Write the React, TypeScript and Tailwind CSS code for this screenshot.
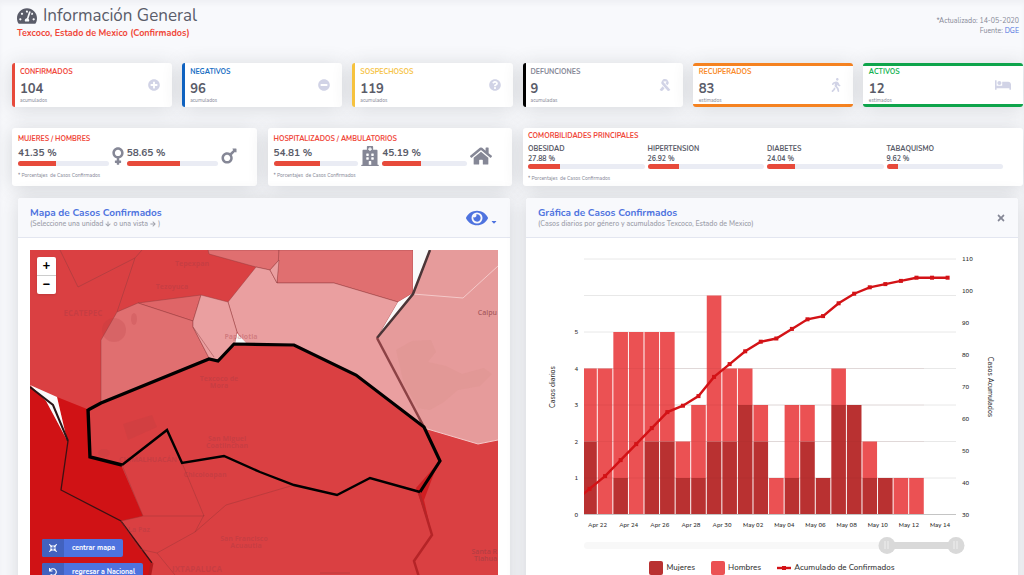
import React, { Fragment, useState } from 'react';
import * as Slider from '@radix-ui/react-slider';
import type { IconType } from 'react-icons';
import {
  FaArrowDown,
  FaArrowRight,
  FaBed,
  FaCaretDown,
  FaCompressArrowsAlt,
  FaEye,
  FaHome,
  FaHospital,
  FaMars,
  FaMinusCircle,
  FaPlusCircle,
  FaQuestionCircle,
  FaRibbon,
  FaTachometerAlt,
  FaTimes,
  FaUndo,
  FaVenus,
  FaWalking,
} from 'react-icons/fa';

type Stat = {
  label: string;
  value: number;
  note: string;
  border: string;
  color: string;
  icon: IconType;
  iconSize: string;
};

const stats: Stat[] = [
  { label: 'CONFIRMADOS', value: 104, note: 'acumulados', border: 'border-l-3 border-[#e74a3b]', color: 'text-[#f0483a]', icon: FaPlusCircle, iconSize: 'size-3' },
  { label: 'NEGATIVOS', value: 96, note: 'acumulados', border: 'border-l-3 border-[#0f62c0]', color: 'text-[#1a6fc4]', icon: FaMinusCircle, iconSize: 'size-3' },
  { label: 'SOSPECHOSOS', value: 119, note: 'acumulados', border: 'border-l-3 border-[#f6c23e]', color: 'text-[#f6c44a]', icon: FaQuestionCircle, iconSize: 'size-3' },
  { label: 'DEFUNCIONES', value: 9, note: 'acumuladas', border: 'border-l-3 border-black', color: 'text-[#858796]', icon: FaRibbon, iconSize: 'size-3' },
  { label: 'RECUPERADOS', value: 83, note: 'estimados', border: 'border-y-3 border-[#f58220]', color: 'text-[#f98a28]', icon: FaWalking, iconSize: 'h-3.5 w-2.5' },
  { label: 'ACTIVOS', value: 12, note: 'estimados', border: 'border-y-3 border-[#0ea44b]', color: 'text-[#16b455]', icon: FaBed, iconSize: 'size-4' },
];

const comorbidities = [
  { name: 'OBESIDAD', pct: 27.88 },
  { name: 'HIPERTENSION', pct: 26.92 },
  { name: 'DIABETES', pct: 24.04 },
  { name: 'TABAQUISMO', pct: 9.62 },
];

// [total, mujeres, acumulado]
const days: [number, number, number][] = [
  [4, 2, 38], [4, 0, 42], [5, 1, 47], [5, 0, 52], [5, 2, 57], [5, 2, 62],
  [2, 1, 64], [3, 1, 67], [6, 2, 73], [4, 2, 77], [4, 3, 81], [3, 2, 84],
  [1, 0, 85], [3, 1, 88], [3, 2, 91], [1, 1, 92], [4, 3, 96], [3, 3, 99],
  [2, 1, 101], [1, 1, 102], [1, 0, 103], [1, 0, 104], [0, 0, 104], [0, 0, 104],
];

const dateLabels = ['Apr 22', 'Apr 24', 'Apr 26', 'Apr 28', 'Apr 30', 'May 02', 'May 04', 'May 06', 'May 08', 'May 10', 'May 12', 'May 14'];

const cardShadow = 'shadow-[0_2px_20px_rgba(58,59,69,0.18)]';

function StatCard({ stat }: { stat: Stat }) {
  const Icon = stat.icon;
  const sideBorder = stat.border.includes('border-l');
  return (
    <div className={`flex h-11 items-center justify-between rounded-[3px] bg-white pr-3 ${sideBorder ? 'pl-[5px]' : 'pl-1.5'} ${stat.border} ${cardShadow}`}>
      <div className="min-w-0">
        <h2 className={`text-[7px] leading-[10px] font-bold ${stat.color}`}>{stat.label}</h2>
        <p className="mt-1 text-[13px] leading-[17px] font-bold text-[#5a5c69]">{stat.value}</p>
        <p className="text-[5px] leading-[5px] text-[#858796]">{stat.note}</p>
      </div>
      <Icon className={`${stat.iconSize} text-[#d1d3e6]`} />
    </div>
  );
}

function Progress({ value, label }: { value: number; label: string }) {
  return (
    <div
      role="progressbar"
      aria-label={label}
      aria-valuenow={value}
      aria-valuemin={0}
      aria-valuemax={100}
      className="h-[5px] w-full overflow-hidden rounded-[3px] bg-[#eaecf4]"
    >
      <div className="h-full bg-[#e74a3b]" style={{ width: `${value}%` }} />
    </div>
  );
}

type SplitProps = {
  title: string;
  items: { label: string; pct: string; icon: IconType; iconClass: string }[];
};

function SplitCard({ title, items }: SplitProps) {
  return (
    <section className={`rounded-[3px] bg-white pt-1.5 pr-5 pl-1.5 ${cardShadow}`}>
      <h2 className="text-[7px] leading-[10px] font-bold text-[#f0483a]">{title}</h2>
      <div className="mt-0.5 flex h-5 items-center gap-[3px]">
        {items.map(({ label, pct, icon: Icon, iconClass }) => (
          <Fragment key={label}>
            <div className="flex-1">
              <p className="text-[10px] leading-[15px] font-bold text-[#5a5c69]">{pct} %</p>
              <Progress value={Number(pct)} label={label} />
            </div>
            <Icon className={`shrink-0 text-[#858796] ${iconClass}`} />
          </Fragment>
        ))}
      </div>
      <p className="mt-1.5 text-[5px] leading-[7px] text-[#858796]">* Porcentajes &nbsp;de Casos Confirmados</p>
    </section>
  );
}

function CasesMap() {
  return (
    <svg viewBox="30 250 468 345" className="block w-full" role="img" aria-label="Mapa de Casos Confirmados">
      <rect x="30" y="250" width="468" height="345" fill="#da4042" />
      <g stroke="#8f3b3d" strokeOpacity=".45" strokeWidth="1">
        <path d="M208 250L209 254L256 267L270 270L279 260V250Z" fill="#e06f70" />
        <path d="M279 250H413V293L398 302L334 283H277Z" fill="#e06f70" />
        <path d="M256 267L270 270L277 283H334L398 302L377 338L424 428L356 375L294 345H246L237 332L228 302Z" fill="#ea9fa0" />
        <path d="M270 270L279 260L277 283Z" fill="#ea9fa0" />
        <path d="M138 303L201 295L193 321Z" fill="#df6567" />
        <path d="M101 403V340L117 312L138 303L193 321V327L209 358Z" fill="#e06f70" />
        <path d="M201 295L228 302L237 332L235 344L218 360L209 358L193 327V321Z" fill="#ea9fa0" />
        <path d="M193 327L214 357" fill="none" />
        <path d="M60 250L78 287L135 258L142 250M135 258L117 312" fill="none" />
      </g>
      <path d="M430 250H498V440L478 444L424 428L377 338L413 293Z" fill="#e69b9b" />
      <path d="M396 350L412 341L431 340L436 352L428 362L446 366L462 374L484 368L492 374L480 386L458 390L444 402L430 410L418 408L404 384Z" fill="#d98f88" fillOpacity=".25" />
      <path d="M413 250H430L413 293ZM413 293L398 302L377 338ZM237 333L247 344H235Z" fill="#fafafa" />
      <path d="M413 294L463 298L498 266M424 428L478 444L498 440" fill="none" stroke="#f4c9c9" strokeWidth="1" />
      <path d="M430 250L413 294L377 338" fill="none" stroke="#4c3537" strokeWidth="2.5" />
      <path d="M377 338L424 427" fill="none" stroke="#8c4245" strokeWidth="2.5" />

      <path d="M30 387L45 398L67 441L57 397L87 409L90 457L121 465L143 516L121 521L152 563L146 595H30Z" fill="#d01215" />
      <path d="M30 385L57 397L67 440L46 401Z" fill="#fafafa" />
      <path d="M30 387L53 405L68 441" fill="none" stroke="#2a1416" strokeWidth="2" />
      <path d="M68 441L61 490L121 521L152 563" fill="none" stroke="#3c1113" strokeWidth="1.3" />
      <path d="M152 563L146 595" fill="none" stroke="#b31c1f" strokeWidth="3" />
      <g fill="none" stroke="#9c3537" strokeOpacity=".45" strokeWidth="1">
        <path d="M122 465L143 516L121 521M143 516H204L182 463" />
        <path d="M204 515L195 532L157 553L175 575L184 595M195 532L226 505L294 485" />
        <path d="M121 521L139 549L157 553M320 573H350" />
      </g>
      <path d="M438 463L416 488L432 535L424 500Z" fill="#d01e21" />
      <path d="M419 492L432 535L414 561L423 590" fill="none" stroke="#b52427" strokeWidth="2.5" />
      <g fill="#b43a40" fillOpacity=".2">
        <circle cx="114" cy="330" r="12" />
        <ellipse cx="134" cy="319" rx="3" ry="6" />
        <path d="M123 424L152 415L157 427L128 440Z" />
        <ellipse cx="104" cy="453" rx="6" ry="4" />
      </g>
      <g className="font-['Open_Sans',sans-serif]" fontSize="7" fontWeight="700" fill="#a33a42" fillOpacity=".35" textAnchor="middle">
        <text x="83" y="316" fontSize="8">ECATEPEC</text>
        <text x="192" y="266">Tepexpan</text>
        <text x="172" y="289">Tezoyuca</text>
        <text x="241" y="339">Papalotla</text>
        <text x="219" y="381">Texcoco de</text>
        <text x="219" y="388">Mora</text>
        <text x="227" y="441">San Miguel</text>
        <text x="227" y="448">Coatlinchan</text>
        <text x="148" y="462">CHIMALHUACÁN</text>
        <text x="205" y="477">Chicoloapan</text>
        <text x="244" y="541">San Francisco</text>
        <text x="246" y="548">Acuautla</text>
        <text x="197" y="572" fontSize="8">IXTAPALUCA</text>
        <text x="139" y="532">La Paz</text>
      </g>
      <g className="font-['Open_Sans',sans-serif]" fontSize="7" fontWeight="600" fill="#8c3c42" fillOpacity=".7" textAnchor="end">
        <text x="497" y="315">Calpu</text>
        <text x="497" y="554" fillOpacity=".5">Santa R</text>
        <text x="497" y="561" fillOpacity=".5">Tlahua</text>
      </g>
      <path d="M88 410L101 403L209 359L218 361L234 344L294 345L356 375L424 427L440 461L420 492" fill="none" stroke="#000" strokeWidth="3.2" />
      <path d="M88 409L90 457L122 465" fill="none" stroke="#000" strokeWidth="3.4" />
      <path d="M122 465L167 430L182 463L224 456L260 472L294 485L337 495L370 478L420 492" fill="none" stroke="#000" strokeWidth="2.4" />
    </svg>
  );
}

const PITCH = 15.57;
const yLeft = (n: number) => 276.5 - n * 36.5;
const yRight = (n: number) => 276.5 - (n - 30) * 3.2;
const xDay = (i: number) => 63.5 + i * PITCH;

function CasesChart() {
  const points = days.map((d, i) => `${xDay(i)},${yRight(d[2])}`).join(' ');
  return (
    <svg viewBox="0 0 492 298" className="block w-full" role="img" aria-label="Gráfica de Casos Confirmados">
      <defs>
        <clipPath id="plot">
          <rect x="58" y="10" width="372" height="268" />
        </clipPath>
      </defs>
      <g stroke="#e8e8e8">
        {[0, 1, 2, 3, 4, 5, 6, 7].map((n) => (
          <line key={n} x1="58" x2="430" y1={yLeft(n)} y2={yLeft(n)} />
        ))}
      </g>
      <g clipPath="url(#plot)">
        {days.map(([total, women], i) => (
          <g key={i}>
            <rect x={xDay(i) - 7.3} y={yLeft(total)} width="14.6" height={(total - women) * 36.5} fill="#eb5153" />
            <rect x={xDay(i) - 7.3} y={yLeft(women)} width="14.6" height={women * 36.5} fill="#b93131" />
          </g>
        ))}
        <g stroke="#8a2020" strokeOpacity=".08">
          {[1, 2, 3, 4].map((n) => (
            <line key={n} x1="58" x2="398" y1={yLeft(n)} y2={yLeft(n)} />
          ))}
        </g>
        <polyline points={`57,${yRight(36.3)} ${points}`} fill="none" stroke="#d31216" strokeWidth="2.4" />
        {days.map((d, i) => (
          <rect key={i} x={xDay(i) - 2} y={yRight(d[2]) - 2} width="4" height="4" fill="#d31216" />
        ))}
      </g>
      <line x1="58" x2="430" y1="276.5" y2="276.5" stroke="#c4c4c4" />
      <g fontSize="6" fontWeight="600" fill="#333">
        {[0, 1, 2, 3, 4, 5].map((n) => (
          <text key={n} x="52" y={yLeft(n) + 2} textAnchor="end">{n}</text>
        ))}
        {[30, 40, 50, 60, 70, 80, 90, 100, 110].map((n) => (
          <text key={n} x="436" y={yRight(n) + 2}>{n}</text>
        ))}
        {dateLabels.map((label, i) => (
          <text key={label} x={71.5 + i * PITCH * 2} y="289" textAnchor="middle">{label}</text>
        ))}
      </g>
      <g fontSize="7" fontWeight="500" fill="#333" textAnchor="middle">
        <text transform="translate(29 149) rotate(-90)">Casos diarios</text>
        <text transform="translate(462 149) rotate(90)">Casos Acumulados</text>
      </g>
    </svg>
  );
}

export default function App() {
  const [range, setRange] = useState([81.5, 100]);

  return (
    <main className="min-h-screen overflow-hidden bg-[#f8f9fc] pr-px pl-3 font-[Nunito,'Open_Sans',sans-serif] shadow-[inset_0_4px_4px_rgba(58,59,69,0.04)]">
      <header className="flex items-start justify-between pt-1.5 pr-1 pl-[5px]">
        <div>
          <h1 className="flex items-center gap-1.5 text-[17px] leading-5 text-[#5a5c69]">
            <FaTachometerAlt className="size-5" />
            Información General
          </h1>
          <p className="text-[9px] leading-[14px] font-bold text-[#f0483a]">Texcoco, Estado de Mexico (Confirmados)</p>
        </div>
        <p className="pt-2.5 text-right text-[7px] leading-[10px] text-[#858796]">
          *Actualizado: 14-05-2020
          <br />
          Fuente: <a href="#dge" className="text-[#4e73df]">DGE</a>
        </p>
      </header>

      <div className="mt-[23px] grid grid-cols-6 gap-[10px]">
        {stats.map((stat) => (
          <StatCard key={stat.label} stat={stat} />
        ))}
      </div>

      <div className="mt-[21px] grid grid-cols-4 gap-[11px]">
        <SplitCard
          title="MUJERES / HOMBRES"
          items={[
            { label: 'Mujeres', pct: '41.35', icon: FaVenus, iconClass: 'h-5 w-3' },
            { label: 'Hombres', pct: '58.65', icon: FaMars, iconClass: 'h-5 w-4' },
          ]}
        />
        <SplitCard
          title="HOSPITALIZADOS / AMBULATORIOS"
          items={[
            { label: 'Hospitalizados', pct: '54.81', icon: FaHospital, iconClass: 'h-5 w-[18px]' },
            { label: 'Ambulatorios', pct: '45.19', icon: FaHome, iconClass: 'size-[22px]' },
          ]}
        />
        <section className={`col-span-2 rounded-[3px] bg-white pt-[3px] pr-5 pb-1 pl-[5px] ${cardShadow}`}>
          <h2 className="text-[7px] leading-[10px] font-bold text-[#f0483a]">COMORBILIDADES PRINCIPALES</h2>
          <div className="mt-[3px] grid grid-cols-4 gap-[3px]">
            {comorbidities.map(({ name, pct }) => (
              <div key={name} className="text-[7px] leading-[10px] font-bold text-[#5a5c69]">
                <p>{name}</p>
                <p>{pct} %</p>
                <Progress value={pct} label={name} />
              </div>
            ))}
          </div>
          <p className="mt-1.5 text-[5px] leading-[7px] text-[#858796]">* Porcentajes &nbsp;de Casos Confirmados</p>
        </section>
      </div>

      <div className="mt-3 grid grid-cols-2 gap-4 pr-[5px] pl-1.5">
        <section className={`rounded-[3px] bg-white ${cardShadow}`}>
          <div className="flex h-10 items-center justify-between rounded-t-[3px] border-b border-[#e3e6f0] bg-[#f8f9fc] pr-3 pl-3">
            <div>
              <h2 className="text-[10px] leading-3 font-bold text-[#4e73df]">Mapa de Casos Confirmados</h2>
              <p className="flex items-center gap-0.5 text-[7px] leading-[9px] font-semibold text-[#a0a2ac]">
                (Seleccione una unidad <FaArrowDown className="size-1.5" /> o una vista <FaArrowRight className="size-1.5" />)
              </p>
            </div>
            <button type="button" aria-label="Cambiar vista" className="flex items-center gap-0.5 text-[#4e73df]">
              <FaEye className="size-[22px]" />
              <FaCaretDown className="mt-2 size-2" />
            </button>
          </div>
          <div className="relative m-3">
            <CasesMap />
            <div className="absolute top-[7px] left-[7px] flex w-[19px] flex-col overflow-hidden rounded-[2px] bg-white text-black shadow">
              <button type="button" aria-label="Acercar" className="flex h-[19px] items-center justify-center border-b border-[#ccc] text-[13px] font-extrabold">
                +
              </button>
              <button type="button" aria-label="Alejar" className="flex h-[18px] items-center justify-center text-[13px] font-extrabold">
                −
              </button>
            </div>
            <div className="absolute bottom-3.5 left-3 flex flex-col items-start gap-1.5 text-[7px] font-bold text-white">
              <button type="button" className="flex h-[18px] items-center rounded-[2px] bg-[#4e73df] pr-2">
                <span className="mr-2 flex h-full w-[22px] items-center justify-center rounded-l-[2px] bg-[#4262bf]">
                  <FaCompressArrowsAlt className="size-2" />
                </span>
                centrar mapa
              </button>
              <button type="button" className="flex h-[18px] items-center rounded-[2px] bg-[#4e73df] pr-2">
                <span className="mr-2 flex h-full w-[22px] items-center justify-center rounded-l-[2px] bg-[#4262bf]">
                  <FaUndo className="size-2" />
                </span>
                regresar a Nacional
              </button>
            </div>
          </div>
        </section>

        <section className={`rounded-[3px] bg-white ${cardShadow}`}>
          <div className="flex h-10 items-center justify-between rounded-t-[3px] border-b border-[#e3e6f0] bg-[#f8f9fc] pr-3 pl-3">
            <div>
              <h2 className="text-[10px] leading-3 font-bold text-[#4e73df]">Gráfica de Casos Confirmados</h2>
              <p className="text-[7px] leading-[9px] font-semibold text-[#a0a2ac]">
                (Casos diarios por género y acumulados Texcoco, Estado de Mexico)
              </p>
            </div>
            <button type="button" aria-label="Cerrar" className="text-[#858796]">
              <FaTimes className="size-2.5" />
            </button>
          </div>
          <CasesChart />
          <div className="pr-[54px] pl-[50px]">
            <Slider.Root
              value={range}
              onValueChange={setRange}
              step={0.5}
              className="relative flex h-[18px] w-full items-center"
            >
              <Slider.Track className="relative mx-2 h-[7px] grow rounded bg-[#f8f8f8]">
                <Slider.Range className="absolute h-full bg-[#d9d9d9]" />
              </Slider.Track>
              {['Inicio', 'Fin'].map((name) => (
                <Slider.Thumb key={name} aria-label={name} className="flex size-[17px] items-center justify-center gap-0.5 rounded-full bg-[#d9d9d9]">
                  <span className="h-2 w-px bg-[#efefef]" />
                  <span className="h-2 w-px bg-[#efefef]" />
                </Slider.Thumb>
              ))}
            </Slider.Root>
          </div>
          <ul className="mt-1.5 flex items-center justify-center gap-4 pb-3 text-[8px] leading-4 font-medium text-[#333]">
            <li className="flex items-center gap-[3px]">
              <span className="size-3.5 rounded-[2px] bg-[#b93131]" />
              Mujeres
            </li>
            <li className="flex items-center gap-[3px]">
              <span className="size-3.5 rounded-[2px] bg-[#eb5153]" />
              Hombres
            </li>
            <li className="flex items-center gap-[3px]">
              <svg viewBox="0 0 14 4" className="h-1 w-3.5">
                <path d="M0 2H14" stroke="#d31216" strokeWidth="2.4" />
                <rect x="5" width="4" height="4" fill="#d31216" />
              </svg>
              Acumulado de Confirmados
            </li>
          </ul>
        </section>
      </div>
    </main>
  );
}
